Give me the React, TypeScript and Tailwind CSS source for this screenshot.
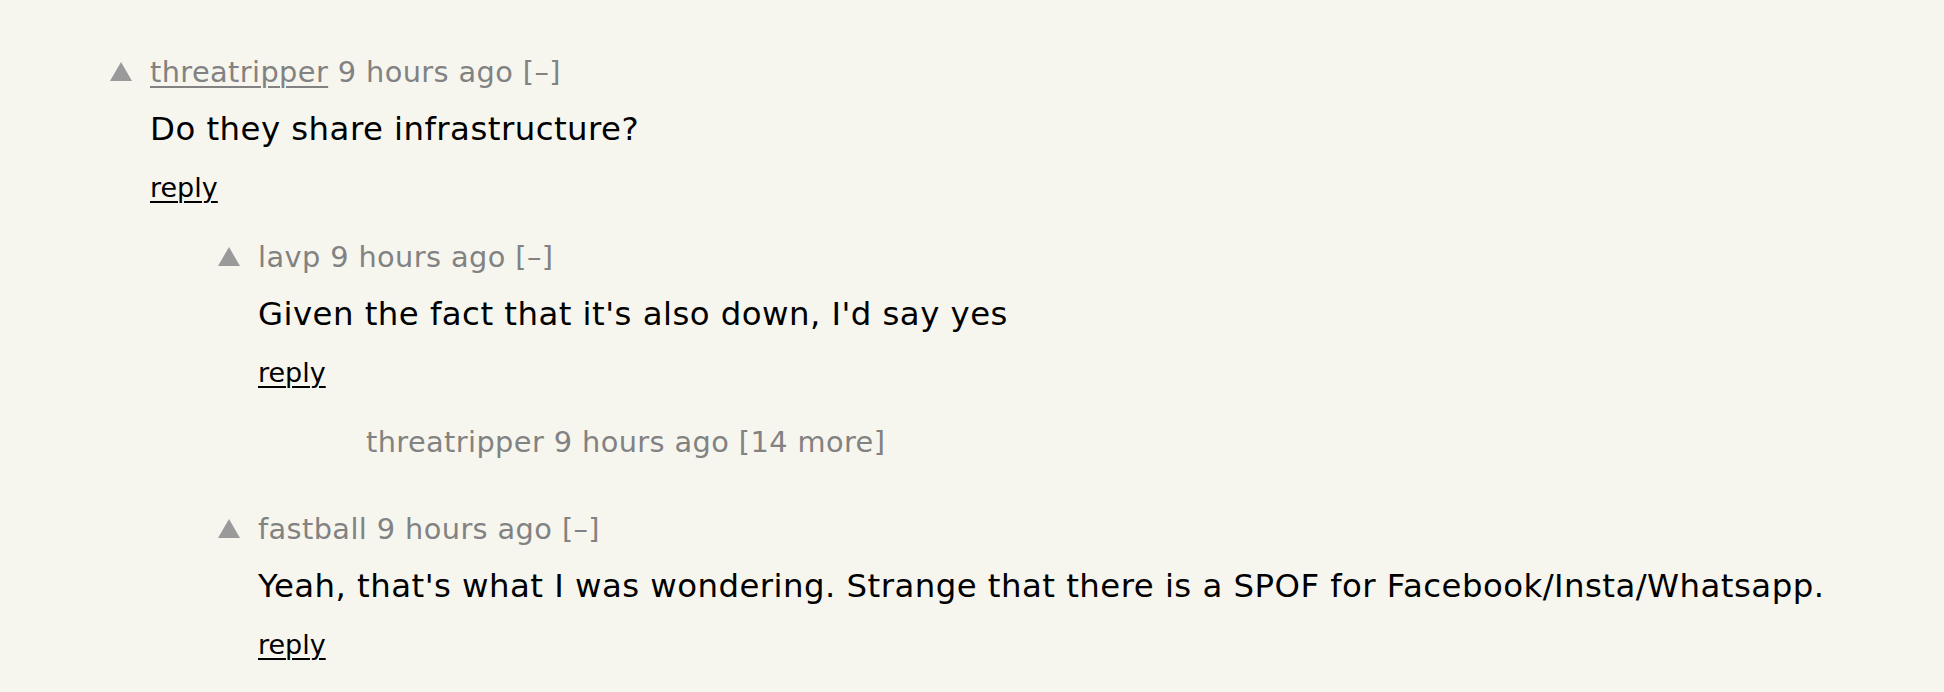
import React from 'react';

interface CommentProps {
  level: number;
  user: string;
  age: string;
  toggle: string;
  text?: string;
  collapsed?: boolean;
  underlineUser?: boolean;
}

const INDENT = ['w-0', 'w-[108px]', 'w-[216px]'];

function VoteArrow() {
  return (
    <svg width="22" height="19" viewBox="0 0 22 19" className="block">
      <polygon points="11,0 22,19 0,19" fill="#9a9a9a" />
    </svg>
  );
}

function Comment({ level, user, age, toggle, text, collapsed, underlineUser }: CommentProps) {
  return (
    <div className="flex">
      {/* indent */}
      <div className={`shrink-0 ${INDENT[level]}`} />

      {/* vote arrow column */}
      <div className="w-[40px] shrink-0 pt-[8px]">{!collapsed && <VoteArrow />}</div>

      <div className="flex flex-col">
        <div className="text-[28.8px] leading-[36px] tracking-[0.4px] text-[#828282] whitespace-nowrap">
          <span className={underlineUser ? 'underline decoration-[2px] underline-offset-[4px]' : ''}>
            {user}
          </span>{' '}
          {age} {toggle}
        </div>
        {!collapsed && (
          <>
            <div className="mt-[19px] text-[32.4px] leading-[40px] tracking-[0.45px] text-black whitespace-nowrap">
              {text}
            </div>
            <div className="mt-[22px] text-[27px] leading-[34px] text-black">
              <span className="underline decoration-[2px] underline-offset-[4px]">reply</span>
            </div>
          </>
        )}
      </div>
    </div>
  );
}

export default function App() {
  return (
    <div
      className="min-h-screen w-full bg-[#f6f6ef] pl-[110px] pt-[54px]"
      style={{ fontFamily: '"DejaVu Sans", Verdana, sans-serif' }}
    >
      <div className="flex flex-col">
        <Comment
          level={0}
          user="threatripper"
          age="9 hours ago"
          toggle="[–]"
          text="Do they share infrastructure?"
          underlineUser
        />
        <div className="h-[34px]" />
        <Comment
          level={1}
          user="lavp"
          age="9 hours ago"
          toggle="[–]"
          text="Given the fact that it's also down, I'd say yes"
        />
        <div className="h-[34px]" />
        <Comment level={2} user="threatripper" age="9 hours ago" toggle="[14 more]" collapsed />
        <div className="h-[51px]" />
        <Comment
          level={1}
          user="fastball"
          age="9 hours ago"
          toggle="[–]"
          text="Yeah, that's what I was wondering. Strange that there is a SPOF for Facebook/Insta/Whatsapp."
        />
      </div>
    </div>
  );
}
